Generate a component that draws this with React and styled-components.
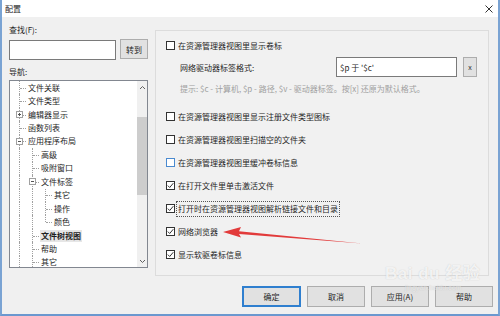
import React from 'react';
import styled, { createGlobalStyle, css } from 'styled-components';

const Global = createGlobalStyle`
  html, body { margin: 0; padding: 0; width: 500px; height: 316px; overflow: hidden; background: #f0f0f0; }
  * { box-sizing: border-box; }
  body { font-family: "Noto Sans CJK SC", "Liberation Sans", sans-serif; font-size: 8px; color: #1e1e1e; }
`;

const Window = styled.div`
  position: relative;
  width: 500px;
  height: 316px;
  display: flex;
  flex-direction: column;
  background: #f0f0f0;
  border-left: 2px solid #7aa3d3;
  border-right: 2px solid #7aa3d3;
  border-bottom: 2px solid #6b98cf;
`;

const TitleBar = styled.div`
  height: 17px;
  flex: none;
  background: #fff;
  display: flex;
  align-items: center;
  justify-content: space-between;
  padding: 0 5px 0 3px;
  font-size: 8px;
  line-height: 10px;
`;

const Body = styled.div`
  flex: 1;
  display: flex;
  flex-direction: column;
  padding: 8px 5px 0 7px;
`;

const Top = styled.div`
  display: flex;
  align-items: flex-start;
  gap: 7px;
`;

const LeftCol = styled.div`
  width: 139px;
  display: flex;
  flex-direction: column;
`;

const Label = styled.div`
  line-height: 10px;
  height: 10px;
  margin-top: ${p => p.$mt || 0}px;
`;

const SearchRow = styled.div`
  display: flex;
  gap: 4px;
  margin-top: 5px;
  align-items: flex-start;
`;

const TextBox = styled.div`
  width: ${p => p.$w}px;
  height: 20px;
  background: #fff;
  border: 1px solid #7a7a7a;
  display: flex;
  align-items: center;
  padding-left: 3px;
  font-size: 8px;
  flex: none;
`;

const Btn = styled.div`
  width: ${p => p.$w}px;
  height: ${p => p.$h || 20}px;
  margin-top: ${p => p.$mt || 0}px;
  margin-left: ${p => p.$ml || 0}px;
  background: #e1e1e1;
  border: 1px solid ${p => (p.$default ? '#2f7fcf' : '#adadad')};
  ${p => p.$default && css`box-shadow: inset 0 0 0 1px #2f7fcf;`}
  display: flex;
  align-items: center;
  justify-content: center;
  font-size: ${p => p.$fs || 8}px;
  flex: none;
  color: #1e1e1e;
`;

const TreeBox = styled.div`
  margin-top: 3px;
  height: 188px;
  background: #fff;
  border: 1px solid #828790;
  display: flex;
  overflow: hidden;
`;

const TreeList = styled.div`
  flex: 1;
  padding-left: 3px;
  overflow: hidden;
`;

const TreeRow = styled.div`
  height: 13.45px;
  display: flex;
  align-items: stretch;
  line-height: 13px;
  white-space: nowrap;
`;

const Guide = styled.div`
  width: 13px;
  flex: none;
  position: relative;
  ${p => p.$on && css`
    &::before {
      content: '';
      position: absolute;
      left: 6px; top: 0; bottom: 0;
      border-left: 1px dotted #a0a0a0;
    }
  `}
`;

const Connector = styled.div`
  width: 13px;
  flex: none;
  position: relative;
  &::before {
    content: '';
    position: absolute;
    left: 6px; top: 0;
    height: ${p => (p.$last ? '50%' : '100%')};
    border-left: 1px dotted #a0a0a0;
  }
  &::after {
    content: '';
    position: absolute;
    left: 7px; right: 0; top: 50%;
    border-top: 1px dotted #a0a0a0;
  }
`;

const Expander = styled.svg`
  position: absolute;
  left: 3px;
  top: 50%;
  margin-top: -3.5px;
  z-index: 1;
`;

const NodeText = styled.span`
  margin-left: 1px;
  padding: 0 1px;
  font-weight: ${p => (p.$sel ? 700 : 400)};
  background: ${p => (p.$sel ? '#e6e6e6' : 'transparent')};
  align-self: center;
  line-height: 12px;
`;

const ScrollBar = styled.div`
  width: 10px;
  flex: none;
  background: #f0f0f0;
  display: flex;
  flex-direction: column;
`;

const ScrollArrow = styled.div`
  height: 12px;
  flex: none;
  display: flex;
  align-items: center;
  justify-content: center;
`;

const Track = styled.div`
  flex: 1;
  padding-top: ${p => p.$top}px;
`;

const Thumb = styled.div`
  height: ${p => p.$h}px;
  background: #cdcdcd;
`;

const Panel = styled.div`
  margin-top: 5px;
  width: 334px;
  height: 246px;
  border: 1px solid #dcdcdc;
  background: #f1f1f1;
  display: flex;
  flex-direction: column;
  padding: 3px 0 0 10px;
`;

const CheckRow = styled.div`
  height: 23px;
  flex: none;
  display: flex;
  align-items: center;
  gap: 2px;
  margin-top: ${p => p.$mt || 0}px;
`;

const Box = styled.div`
  width: 9px;
  height: 9px;
  flex: none;
  background: #fff;
  border: 1px solid ${p => (p.$hover ? '#4a8ad0' : '#333')};
  display: flex;
  align-items: center;
  justify-content: center;
`;

const CheckText = styled.span`
  line-height: 12px;
  padding: 1px 1px;
  border: 1px dotted ${p => (p.$focus ? '#555' : 'transparent')};
  margin-left: -1px;
`;

const FormatRow = styled.div`
  height: 20px;
  flex: none;
  display: flex;
  align-items: center;
  padding-left: 14px;
`;

const FormatLabel = styled.div`
  width: 156px;
  flex: none;
`;

const Hint = styled.div`
  height: 22px;
  flex: none;
  display: flex;
  align-items: center;
  padding-left: 14px;
  color: #a0a0a0;
`;

const Footer = styled.div`
  margin-top: 10px;
  display: flex;
  justify-content: flex-end;
  gap: 6px;
`;

const Overlay = styled.svg`
  position: absolute;
  left: -2px;
  top: 0;
  pointer-events: none;
`;

const Watermark = styled.div`
  position: absolute;
  left: 383px;
  top: 264px;
  display: flex;
  flex-direction: column;
  align-items: flex-start;
  pointer-events: none;
  color: rgba(255,255,255,0.8);
  text-shadow: 0 0 1px rgba(140,140,140,0.45);
  font-family: "Liberation Sans", "Noto Sans CJK SC", sans-serif;
`;

const WmMain = styled.div`
  font-size: 17px;
  font-weight: 700;
  line-height: 20px;
  letter-spacing: 0.5px;
`;

const WmSub = styled.div`
  font-size: 7px;
  line-height: 8px;
  margin-left: 20px;
  color: rgba(255,255,255,0.6);
`;

const Check = () => (
  <svg width="7" height="7" viewBox="0 0 7 7">
    <polyline points="0.8,3.6 2.7,5.5 6.3,1.2" fill="none" stroke="#333" strokeWidth="1" />
  </svg>
);

const Chevron = ({ up }) => (
  <svg width="7" height="5" viewBox="0 0 7 5">
    <polyline points={up ? '1,4 3.5,1.5 6,4' : '1,1 3.5,3.5 6,1'} fill="none" stroke="#606060" strokeWidth="1" />
  </svg>
);

const ExpandIcon = ({ plus }) => (
  <Expander width="7" height="7" viewBox="0 0 7 7">
    <rect x="0.5" y="0.5" width="6" height="6" fill="#fff" stroke="#a0a0a0" />
    <line x1="2" y1="3.5" x2="5" y2="3.5" stroke="#555" />
    {plus && <line x1="3.5" y1="2" x2="3.5" y2="5" stroke="#555" />}
  </Expander>
);

const tree = [
  { t: '文件关联', g: [] },
  { t: '文件类型', g: [] },
  { t: '编辑器显示', g: [], exp: 'plus' },
  { t: '函数列表', g: [] },
  { t: '应用程序布局', g: [], exp: 'minus' },
  { t: '高级', g: [true] },
  { t: '吸附窗口', g: [true] },
  { t: '文件标签', g: [true], exp: 'minus' },
  { t: '其它', g: [true, true] },
  { t: '操作', g: [true, true] },
  { t: '颜色', g: [true, true], last: true },
  { t: '文件树视图', g: [true], sel: true },
  { t: '帮助', g: [true] },
  { t: '其它', g: [true] },
];

const checks = [
  { t: '在资源管理器视图里显示注册文件类型图标' },
  { t: '在资源管理器视图里扫描空的文件夹' },
  { t: '在资源管理器视图里缓冲卷标信息', hover: true },
  { t: '在打开文件里单击激活文件', on: true },
  { t: '打开时在资源管理器视图解析链接文件和目录', on: true, focus: true },
  { t: '网络浏览器', on: true },
  { t: '显示软驱卷标信息', on: true },
];

export default function App() {
  return (
    <>
      <Global />
      <Window>
        <TitleBar>
          <span>配置</span>
          <svg width="8" height="8" viewBox="0 0 8 8">
            <path d="M0.5 0.5 L7.5 7.5 M7.5 0.5 L0.5 7.5" stroke="#333" strokeWidth="1" />
          </svg>
        </TitleBar>
        <Body>
          <Top>
            <LeftCol>
              <Label>查找(F):</Label>
              <SearchRow>
                <TextBox $w={107} />
                <Btn $w={28} $mt={-1}>转到</Btn>
              </SearchRow>
              <Label $mt={7}>导航:</Label>
              <TreeBox>
                <TreeList>
                  {tree.map((n, i) => (
                    <TreeRow key={i}>
                      {n.g.map((on, j) => (
                        <Guide key={j} $on={on} />
                      ))}
                      <Connector $last={n.last}>
                        {n.exp && <ExpandIcon plus={n.exp === 'plus'} />}
                      </Connector>
                      <NodeText $sel={n.sel}>{n.t}</NodeText>
                    </TreeRow>
                  ))}
                </TreeList>
                <ScrollBar>
                  <ScrollArrow><Chevron up /></ScrollArrow>
                  <Track $top={24}>
                    <Thumb $h={78} />
                  </Track>
                  <ScrollArrow><Chevron /></ScrollArrow>
                </ScrollBar>
              </TreeBox>
            </LeftCol>
            <Panel>
              <CheckRow>
                <Box />
                <CheckText>在资源管理器视图里显示卷标</CheckText>
              </CheckRow>
              <FormatRow>
                <FormatLabel>网络驱动器标签格式:</FormatLabel>
                <TextBox $w={121}>$p 于 '$c'</TextBox>
                <Btn $w={14} $mt={-1} $ml={6} $fs={7}>x</Btn>
              </FormatRow>
              <Hint>提示: $c - 计算机, $p - 路径, $v - 驱动器标签。按[x] 还原为默认格式。</Hint>
              {checks.map((c, i) => (
                <CheckRow key={i} $mt={i === 0 ? 6 : 0}>
                  <Box $hover={c.hover}>{c.on && <Check />}</Box>
                  <CheckText $focus={c.focus}>{c.t}</CheckText>
                </CheckRow>
              ))}
            </Panel>
          </Top>
          <Footer>
            <Btn $w={59} $h={21} $default>确定</Btn>
            <Btn $w={58} $h={21}>取消</Btn>
            <Btn $w={58} $h={21}>应用(A)</Btn>
            <Btn $w={58} $h={21}>帮助</Btn>
          </Footer>
        </Body>
        <Watermark>
          <WmMain>Bai du 经验</WmMain>
          <WmSub>jingyan.baidu.com</WmSub>
        </Watermark>
        <Overlay width="500" height="316" viewBox="0 0 500 316">
          <polygon points="223,232 241,227 239,231.3 362,243.5 239,234 241,237.5" fill="#e23b3b" />
        </Overlay>
      </Window>
    </>
  );
}
